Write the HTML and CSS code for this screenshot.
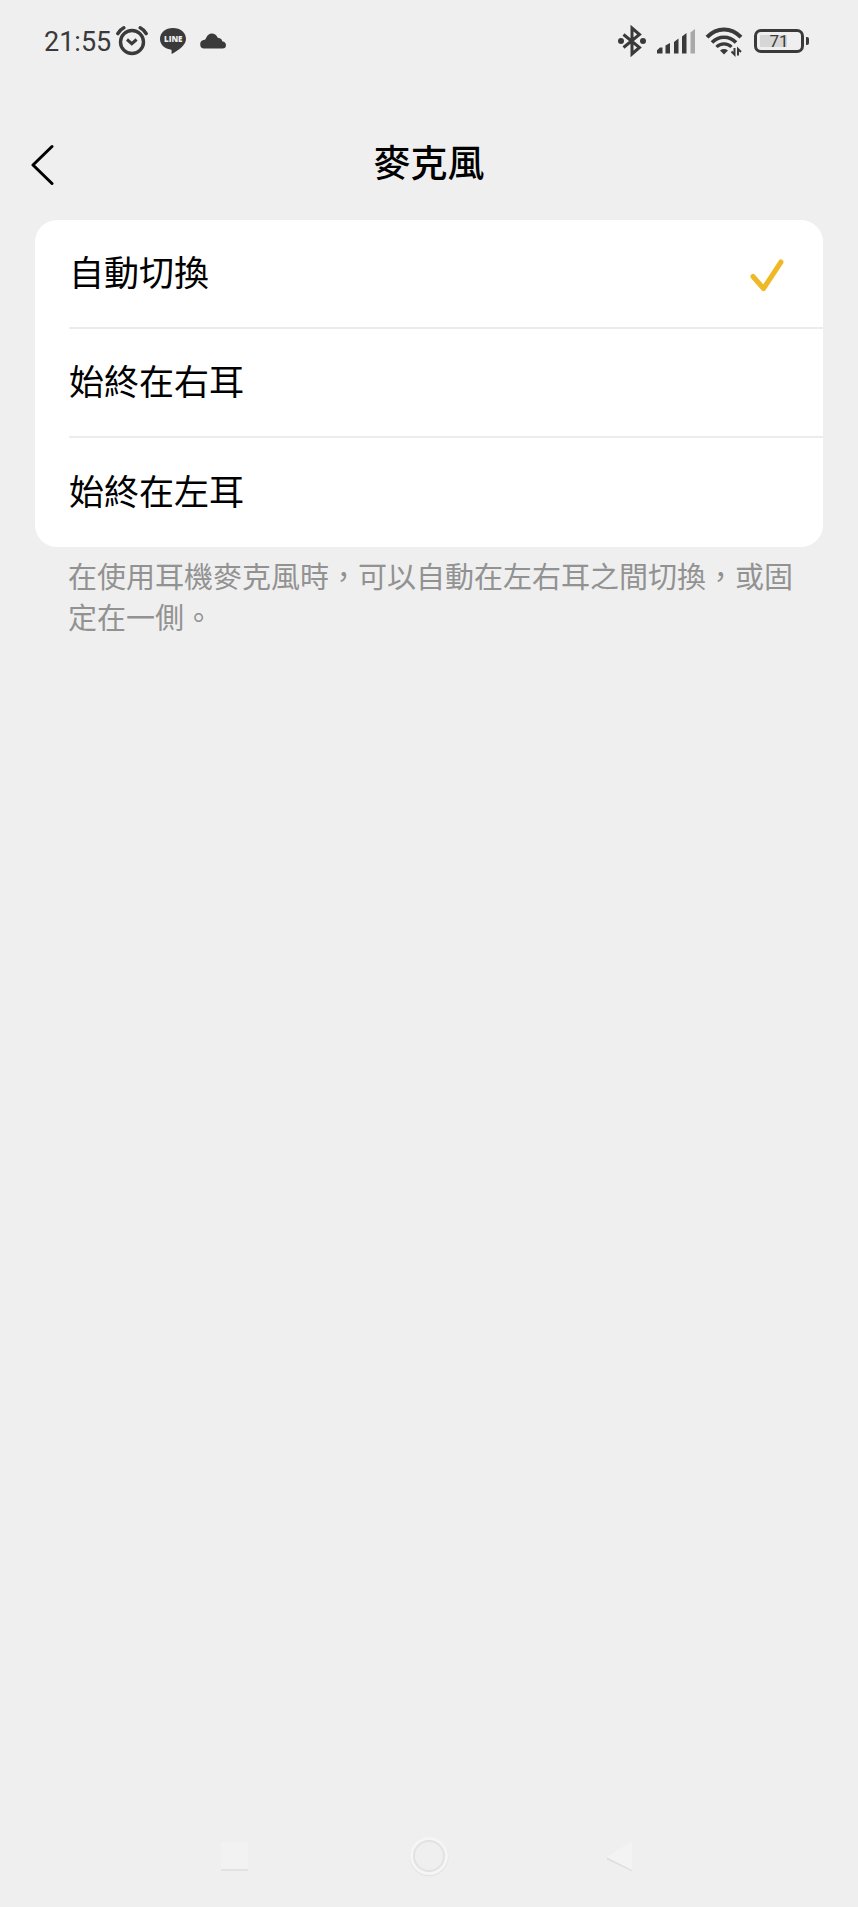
FILE: index.html
```html
<!DOCTYPE html>
<html lang="zh-Hant-TW">

<head>
    <meta charset="UTF-8">
    <meta name="viewport" content="width=device-width, initial-scale=1.0">
    <title>麥克風</title>
    <link rel="stylesheet" href="styles.css">
</head>

<body>
    <div class="status-bar">
        <div class="status-left">
            <span class="time">21:55</span>
            <svg class="alarm" width="32" height="32" viewBox="0 0 32 32" fill="none" stroke="#3a3a3a">
                <circle cx="16" cy="17" r="11.5" stroke-width="3.4" />
                <path d="M11 14.5l4.8 4.2 4.8-4.2" stroke-width="3" />
                <path d="M1.8 8.6q2-3.8 6-5.8M30.2 8.6q-2-3.8-6-5.8" stroke-width="3.4" stroke-linecap="round" />
            </svg>
            <div class="line-app">
                <svg width="28" height="28" viewBox="0 0 28 28" fill="#3a3a3a">
                    <path d="M14 1C6.5 1 1 5.6 1 12c0 5.4 4.4 9.5 10.5 10.6 1.3.3 1.3 1.3 1 3.2-.1.9.4 1.1 1.2.6C19 23.3 27 18.5 27 12 27 5.6 21.5 1 14 1z" />
                </svg>
                <span class="line-text">LINE</span>
            </div>
            <svg class="cloud" width="28" height="28" viewBox="0 0 28 28" fill="#3a3a3a">
                <path d="M5 21.5a4.3 4.3 0 0 1-.3-8.5c1.3-.2 1.9-.7 2.4-2C8.3 8 10.3 6.5 12.8 6.5c2.7 0 4.400 1.3 5.5 3.6.3.7.8.9 1.600 1 1.9.3 3 1.5 3.3 3.2 2.2.3 3.8 1.7 3.8 3.9 0 2-1.3 3.3-3.3 3.3z" />
            </svg>
        </div>
        <div class="status-right">
            <svg width="30" height="32" viewBox="0 0 30 32">
                <path d="M6.5 9.5L22.5 22.5 15 29V3l7.5 6.5L6.5 22.5" fill="none" stroke="#3a3a3a" stroke-width="3" />
                <circle cx="4" cy="16" r="3" fill="#3a3a3a" />
                <circle cx="26" cy="16" r="3" fill="#3a3a3a" />
            </svg>
            <svg width="38" height="32" viewBox="0 0 38 32" fill="#3a3a3a">
                <path d="M0 28.5v-3.3l3-2.700h2.500v6zM8.500 20.500l4.500-2.500v10.500H8.500zM17 17l4.500-3.500v15H17zM25 11.500l4.500-3.500v20.500H25z" />
                <path d="M33.500 7.500L38 4v24.500h-4.500z" fill="#a9a9a9" />
            </svg>
            <svg width="38" height="32" viewBox="0 0 38 32" fill="none" stroke="#3a3a3a">
                <path d="M2 12.2Q9.500 4.500 19 4.500T36 12.200" stroke-width="4" />
                <path d="M7 17.5Q12 12.2 19 12.2T31 17.5" stroke-width="3.6" />
                <path d="M11.5 22Q14.5 18.8 19 18.8T26.5 22" stroke-width="3.2" />
                <path d="M15 25.5q4-2.800 8 0L19 29.500z" fill="#3a3a3a" stroke="none" />
                <path d="M29.500 23v6.500l-3-3M33 30.500V24l3 3" stroke-width="2" />
            </svg>
            <div class="battery"><span class="battery-level">71</span></div>
        </div>
    </div>

    <header class="header">
        <button type="button" class="back" aria-label="返回">
            <svg width="24" height="42" viewBox="0 0 24 42" fill="none" stroke="#000" stroke-width="3" stroke-linecap="round" stroke-linejoin="round">
                <path d="M21 2.5L2 21l19 18.5" />
            </svg>
        </button>
        <h1>麥克風</h1>
    </header>

    <main>
        <form class="options">
            <label class="option">
                <input type="radio" name="mic" value="auto" checked>
                <span>自動切換</span>
                <svg class="check" width="34" height="34" viewBox="0 0 34 34">
                    <path d="M3 18.5l10.5 12L31 4" />
                </svg>
            </label>
            <label class="option">
                <input type="radio" name="mic" value="right">
                <span>始終在右耳</span>
                <svg class="check" width="34" height="34" viewBox="0 0 34 34">
                    <path d="M3 18.5l10.5 12L31 4" />
                </svg>
            </label>
            <label class="option">
                <input type="radio" name="mic" value="left">
                <span>始終在左耳</span>
                <svg class="check" width="34" height="34" viewBox="0 0 34 34">
                    <path d="M3 18.5l10.5 12L31 4" />
                </svg>
            </label>
        </form>
        <p class="hint">在使用耳機麥克風時，可以自動在左右耳之間切換，或固定在一側。</p>
    </main>

    <nav class="nav-bar">
        <button type="button" aria-label="最近">
            <svg width="42" height="42" viewBox="0 0 42 42">
                <path d="M7 8h27v28H7z" fill="#e2e2e2" />
                <path d="M7 7h27v27H7z" fill="#f2f2f2" />
            </svg>
        </button>
        <button type="button" aria-label="主畫面">
            <svg width="42" height="42" viewBox="0 0 42 42" fill="none">
                <circle cx="21" cy="22" r="18" stroke="#e4e4e4" stroke-width="3" />
                <circle cx="21" cy="21" r="15.5" stroke="#e2e2e2" stroke-width="3" />
                <circle cx="21" cy="21" r="17.5" stroke="#f5f5f5" stroke-width="3" />
            </svg>
        </button>
        <button type="button" aria-label="返回">
            <svg width="42" height="42" viewBox="0 0 42 42">
                <path d="M5 22.5l25 12v2l-25-12z" fill="#dfdfdf" />
                <path d="M5 22L30 6v29z" fill="#f3f3f3" />
            </svg>
        </button>
    </nav>
</body>

</html>
```
FILE: styles.css
```css
* {
    box-sizing: border-box;
}

body {
    display: flex;
    flex-direction: column;
    min-height: 100vh;
    margin: 0;
    background-color: #efefef;
    color: #000;
    font-family: Roboto, "Noto Sans CJK TC", sans-serif;
}

button {
    padding: 0;
    border: none;
    background: none;
    cursor: pointer;
}

svg {
    display: block;
}

.status-bar {
    display: flex;
    justify-content: space-between;
    align-items: center;
    height: 82px;
    padding: 0 54px 0 44px;
    color: #3a3a3a;
}

.status-left,
.status-right {
    display: flex;
    align-items: center;
}

.status-right {
    gap: 10px;
}

.time {
    padding-top: 2px;
    font-size: 27px;
    line-height: 32px;
}

.alarm {
    margin-left: 5px;
}

.line-app {
    position: relative;
    margin-left: 11px;
}

.line-text {
    position: absolute;
    top: 7px;
    left: 0;
    width: 28px;
    color: #efefef;
    font-family: "Open Sans", sans-serif;
    font-size: 8px;
    font-weight: 800;
    line-height: 10px;
    text-align: center;
}

.cloud {
    margin-left: 12px;
}

.battery {
    display: flex;
    position: relative;
    width: 50px;
    height: 24px;
    margin-left: 1px;
    padding: 3px;
    border: 3px solid #3a3a3a;
    border-radius: 7px;
}

.battery::after {
    content: "";
    position: absolute;
    top: 5px;
    right: -8px;
    width: 3px;
    height: 8px;
    border-radius: 0 2px 2px 0;
    background-color: #3a3a3a;
}

.battery-level {
    flex: 1;
    background: linear-gradient(to right, #d6d6d6 71%, transparent 71%);
    font-size: 17px;
    line-height: 13px;
    text-align: center;
}

.header {
    display: grid;
    grid-template-columns: 60px 1fr 60px;
    align-items: center;
    height: 138px;
    padding-top: 28px;
}

.back {
    justify-self: end;
    margin-right: 5px;
}

h1 {
    margin: 0;
    font-size: 37px;
    font-weight: 500;
    line-height: 54px;
    text-align: center;
}

.options {
    margin: 0 35px;
    border-radius: 22px;
    background-color: #fff;
}

.option {
    display: flex;
    align-items: center;
    justify-content: space-between;
    height: 109px;
    margin-left: 34px;
    padding: 2px 39px 0 0;
    border-bottom: 2px solid #ececec;
    font-size: 35px;
    line-height: 50px;
    cursor: pointer;
}

.option:last-child {
    border-bottom: none;
}

.option input {
    appearance: none;
    width: 0;
    height: 0;
    margin: 0;
}

.option span {
    flex: 1;
}

.check {
    visibility: hidden;
    fill: none;
    stroke: #efb827;
    stroke-width: 5;
    stroke-linecap: round;
    stroke-linejoin: round;
}

.option input:checked ~ .check {
    visibility: visible;
}

.hint {
    margin: 11px 60px 0 68px;
    color: #929292;
    font-size: 29px;
    line-height: 41px;
}

.nav-bar {
    display: flex;
    justify-content: center;
    gap: 152px;
    margin-top: auto;
    padding-bottom: 30px;
}
```
